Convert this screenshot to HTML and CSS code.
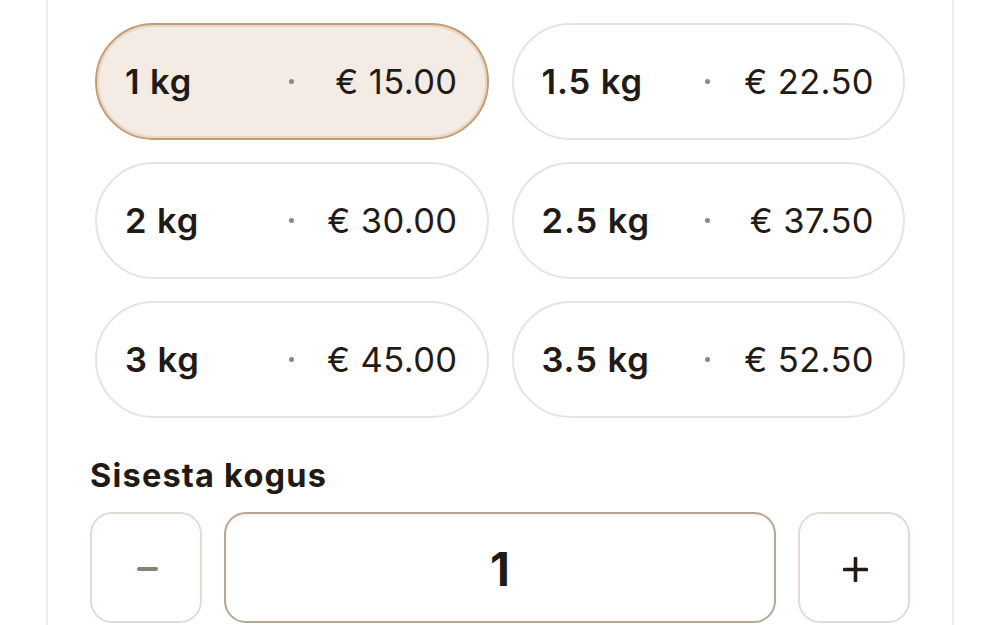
FILE: index.html
```html
<!DOCTYPE html>
<html lang="et">
<head>
<meta charset="utf-8">
<title>Kogus</title>
<link rel="stylesheet" href="styles.css">
</head>
<body>
<div class="page">
  <section class="card">
    <div class="options">
      <div class="pill selected"><span class="weight">1 kg</span><span class="dot"></span><span class="price">€ 15.00</span></div>
      <div class="pill"><span class="weight">1.5 kg</span><span class="dot"></span><span class="price">€ 22.50</span></div>
      <div class="pill"><span class="weight">2 kg</span><span class="dot"></span><span class="price">€ 30.00</span></div>
      <div class="pill"><span class="weight">2.5 kg</span><span class="dot"></span><span class="price">€ 37.50</span></div>
      <div class="pill"><span class="weight">3 kg</span><span class="dot"></span><span class="price">€ 45.00</span></div>
      <div class="pill"><span class="weight">3.5 kg</span><span class="dot"></span><span class="price">€ 52.50</span></div>
    </div>
    <h2 class="qty-title">Sisesta kogus</h2>
    <div class="stepper">
      <div class="step-btn minus"><span class="minus-bar"></span></div>
      <div class="qty-input">1</div>
      <div class="step-btn plus">
        <svg width="25" height="25" viewBox="0 0 25 25" aria-hidden="true"><path d="M12.5 1.5v22M1.5 12.5h22" stroke="#221a15" stroke-width="3.6" stroke-linecap="round" fill="none"/></svg>
      </div>
    </div>
  </section>
</div>
</body>
</html>
```

FILE: styles.css
```css
* { box-sizing: border-box; }
html, body { margin: 0; padding: 0; background: #ffffff; }
body {
  font-family: Inter, "Noto Sans", "Liberation Sans", sans-serif;
  color: #221a15;
  overflow: hidden;
}
.page {
  padding: 0 46px;
}
.card {
  border-left: 2px solid #ebebeb;
  border-right: 2px solid #ebebeb;
  padding: 23px 42px 40px;
  min-height: 700px;
}
.options {
  display: grid;
  grid-template-columns: 1fr 1fr;
  column-gap: 23px;
  row-gap: 22px;
  padding: 0 5px;
}
.pill {
  height: 117px;
  border: 2px solid #e4e4e4;
  border-radius: 60px;
  background: #ffffff;
  display: grid;
  grid-template-columns: 1fr auto 1fr;
  align-items: center;
  padding: 0 29px 0 28px;
}
.pill.selected {
  background: #f3ebe4;
  border-color: #c59c70;
  box-shadow: inset 0 0 0 2px #e6d8ca;
}
.weight {
  font-size: 34.5px;
  font-weight: 600;
  letter-spacing: 0.9px;
}
.dot {
  width: 5px;
  height: 5px;
  border-radius: 50%;
  background: #8c8782;
}
.price {
  justify-self: end;
  font-size: 34.5px;
  font-weight: 400;
  letter-spacing: 0.4px;
}
.qty-title {
  margin: 38px 0 17px;
  font-size: 32.5px;
  font-weight: 700;
  line-height: 1.21;
  letter-spacing: 1.2px;
}
.stepper {
  display: grid;
  grid-template-columns: 112px 1fr 112px;
  column-gap: 22px;
  height: 111px;
}
.step-btn {
  border: 2px solid #e2dbd4;
  border-radius: 22px;
  background: #ffffff;
  display: flex;
  align-items: center;
  justify-content: center;
  padding: 3px 0 0 3px;
}
.minus-bar {
  width: 21px;
  height: 4px;
  border-radius: 2px;
  background: #858078;
}
.qty-input {
  border: 2px solid #b6a796;
  border-radius: 22px;
  box-shadow: inset 0 2px 4px rgba(0, 0, 0, 0.06);
  display: flex;
  align-items: center;
  justify-content: center;
  font-size: 46px;
  font-weight: 700;
  padding-top: 3px;
}
```
